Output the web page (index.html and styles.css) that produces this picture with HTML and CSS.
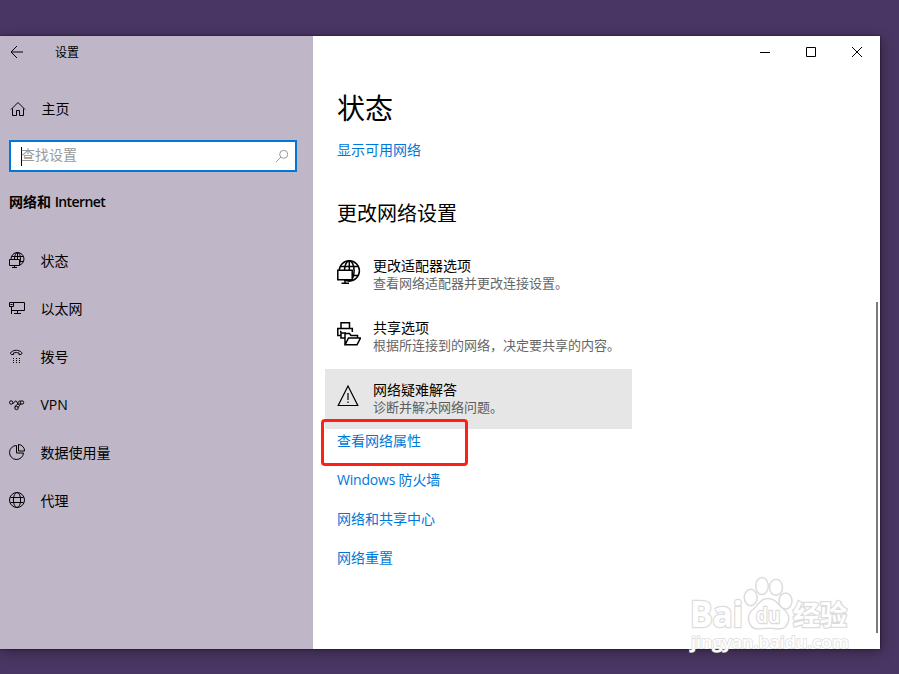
FILE: index.html
```html
<!DOCTYPE html>
<html lang="zh-CN">
<head>
    <meta charset="UTF-8">
    <meta name="viewport" content="width=device-width, initial-scale=1.0">
    <title>设置</title>
    <link rel="stylesheet" href="styles.css">
</head>
<body>
    <div class="window">
        <aside class="sidebar">
            <div class="titlebar">
                <svg class="back" width="14" height="14" viewBox="0 0 14 14"><path d="M7 1L1 7l6 6M1 7h12"/></svg>
                <span>设置</span>
            </div>

            <a class="nav-item home">
                <svg width="16" height="16" viewBox="0 0 16 16"><path d="M1 8.5L8 1.5l7 7M2.5 7.5v7h4v-5h3v5h4v-7"/></svg>
                <span>主页</span>
            </a>

            <div class="search">
                <span class="caret"></span>
                <span class="placeholder">查找设置</span>
                <svg width="14" height="14" viewBox="0 0 14 14"><circle cx="8.7" cy="5.3" r="4"/><path d="M5.8 8.2L1 13"/></svg>
            </div>

            <h2 class="section-name">网络和 <span class="latin">Internet</span></h2>

            <nav>
                <a class="nav-item">
                    <svg width="18" height="18" viewBox="0 0 18 18"><circle cx="8.5" cy="7" r="6.5"/><ellipse cx="8.5" cy="7" rx="3" ry="6.5"/><path d="M8.5.5V7M2.500 4.500h12M10.500 9.500h4.300"/><path class="screen" d="M.5 7.500h10v6H.5z"/><path d="M5.500 13.500v2M3 15.500h5"/></svg>
                    <span>状态</span>
                </a>
                <a class="nav-item">
                    <svg width="18" height="18" viewBox="0 0 18 18"><path d="M4.500 2.500h11v8h-13M.5 2.500h4v4h-4zM2.500 6.500v7.500M8.500 10.500v3M5 13.500h7M1.500 4.500h2"/></svg>
                    <span>以太网</span>
                </a>
                <a class="nav-item">
                    <svg width="18" height="18" viewBox="0 0 18 18"><path d="M4.500 6.500h-2c-1.200-.5-1.200-1.800-.3-2.400C5 1.700 9.500 1.700 12.300 4.100c.9.600.9 1.900-.3 2.400h-2V5c-2-.6-3.500-.6-5.500 0z"/><path stroke-dasharray="1 2" d="M4 10.500h7M4 12.500h7M4 14.500h7"/></svg>
                    <span>拨号</span>
                </a>
                <a class="nav-item">
                    <svg width="18" height="18" viewBox="0 0 18 18"><circle cx="2.200" cy="6.500" r="1.700"/><circle cx="7.500" cy="12" r="1.700"/><circle cx="13" cy="6.500" r="1.700"/><path d="M3.600 7.500c1.500.5 1.500-2.500 3.200-2.500 2 0 1 3.500 3 3.500 1.300 0 1-1 1.700-1.700M6 11c-.5-1.700 2.700-1.500 3-3.500.2-2 1.200-3 2.800-2.400M9.200 11.700c.5-1.700 1.500-2.500 2.700-3.700"/></svg>
                    <span>VPN</span>
                </a>
                <a class="nav-item">
                    <svg width="18" height="18" viewBox="0 0 18 18"><path d="M7.500 1.500a7 7 0 1 0 7 7.500h-7zM9.500.5v6.500h6.100A6.500 6.500 0 0 0 9.500.5z"/></svg>
                    <span>数据使用量</span>
                </a>
                <a class="nav-item">
                    <svg width="18" height="18" viewBox="0 0 18 18"><circle cx="8" cy="8" r="7.500"/><ellipse cx="8" cy="8" rx="3.600" ry="7.500"/><path d="M1.500 5.500h13M1.500 10.500h13"/></svg>
                    <span>代理</span>
                </a>
            </nav>
        </aside>

        <main class="content">
            <div class="controls">
                <svg width="46" height="32" viewBox="0 0 46 32"><path d="M18 16.500h10"/></svg>
                <svg width="46" height="32" viewBox="0 0 46 32"><path d="M18.500 11.500h9v9h-9z"/></svg>
                <svg width="46" height="32" viewBox="0 0 46 32"><path d="M18 11l10 10M28 11L18 21"/></svg>
            </div>

            <h1>状态</h1>
            <a class="link available">显示可用网络</a>
            <h2>更改网络设置</h2>

            <div class="options">
                <div class="option">
                    <svg width="24" height="26" viewBox="0 0 24 26"><circle cx="12.300" cy="11.800" r="10.100"/><ellipse cx="12.300" cy="11.800" rx="4.800" ry="10.100"/><path d="M12.300 1.700V11M3.500 7.500h17.800M15.500 16.500h6"/><path class="screen" d="M.8 11.300h14.400v9.500H.8z"/><path d="M8 20.800v3.500M4.500 24.300h7.500"/></svg>
                    <div>
                        <div class="option-title">更改适配器选项</div>
                        <div class="option-text">查看网络适配器并更改连接设置。</div>
                    </div>
                </div>
                <div class="option">
                    <svg width="24" height="26" viewBox="0 0 24 26"><path d="M4 7.500V1.800h8.500v5.700M4 14.500H.8v-7h14.500V11M3 10.500h1.500M7.500 17H4v-5h5M8 23.800V12.500h4.500l1.500 2h6.500V17M8 23.800L11.500 17h12L20 23.800z"/></svg>
                    <div>
                        <div class="option-title">共享选项</div>
                        <div class="option-text">根据所连接到的网络，决定要共享的内容。</div>
                    </div>
                </div>
                <div class="option active">
                    <svg class="thin" width="24" height="26" viewBox="0 0 24 26"><path d="M11 3L1.200 22.500h19.600zM11 10v7M11 18.500v1.500"/></svg>
                    <div>
                        <div class="option-title">网络疑难解答</div>
                        <div class="option-text">诊断并解决网络问题。</div>
                    </div>
                </div>
            </div>

            <div class="links">
                <a class="link marked">查看网络属性</a>
                <a class="link firewall">Windows 防火墙</a>
                <a class="link">网络和共享中心</a>
                <a class="link">网络重置</a>
            </div>
            <div class="scrollbar"></div>
        </main>
    </div>

    <svg class="watermark" width="180" height="90" viewBox="0 0 180 90">
        <ellipse cx="65.700" cy="30.500" rx="6.500" ry="8.200"/>
        <ellipse cx="77" cy="19" rx="6.300" ry="8.500"/>
        <ellipse cx="91" cy="20.300" rx="6.500" ry="8"/>
        <ellipse cx="100.500" cy="34" rx="6.500" ry="8"/>
        <path d="M83 31.500c-8 0-9 6-14.500 10.500-8 6-6 20 5 20 4 0 6-.8 10-.8s6 .8 10 .8c11 0 13.500-13 5.500-19.500C93 38 91 31.500 83 31.500z"/>
        <text class="mark-big" x="5" y="60" textLength="53" lengthAdjust="spacingAndGlyphs">Bai</text>
        <text class="mark-du" x="71" y="56" textLength="24" lengthAdjust="spacingAndGlyphs">du</text>
        <text class="mark-cn" x="108" y="58" textLength="54" lengthAdjust="spacingAndGlyphs">经验</text>
        <text class="mark-url" x="6" y="80.500" textLength="158" lengthAdjust="spacingAndGlyphs">jingyan.baidu.com</text>
    </svg>
</body>
</html>
```

FILE: styles.css
```css
* {
    box-sizing: border-box;
}

body {
    margin: 0;
    padding-top: 36px;
    height: 674px;
    overflow: hidden;
    background-color: #4a3664;
    font-family: "Open Sans", "Noto Sans CJK SC", sans-serif;
    font-size: 14px;
    color: #000;
}

h1, h2 {
    margin: 0;
    font-weight: 400;
}

svg {
    display: block;
    flex: none;
    fill: none;
    stroke: #000;
    stroke-width: 1;
}

.window {
    display: flex;
    width: 880px;
    height: 613px;
    box-shadow: 0 0 2px rgba(0, 0, 0, 0.7), 2px 3px 12px rgba(0, 0, 0, 0.35);
}

/* sidebar */
.sidebar {
    width: 313px;
    background-color: #bfb7c8;
}

.titlebar {
    display: flex;
    align-items: center;
    gap: 31px;
    height: 32px;
    padding-left: 10px;
    font-size: 12px;
}

.nav-item {
    display: flex;
    align-items: center;
    gap: 13.5px;
    height: 48px;
    padding-left: 9px;
    line-height: 20px;
}

.nav-item .screen {
    fill: #bfb7c8;
}

.home {
    gap: 15.5px;
    margin-top: 17px;
    padding-left: 10px;
}

.search {
    display: flex;
    align-items: center;
    width: 288px;
    height: 32px;
    margin: 7px 0 0 9px;
    padding: 0 6px 0 10px;
    border: 2px solid #0078d7;
    background-color: #fff;
}

.search svg {
    margin-left: auto;
    stroke: #999;
}

.caret {
    width: 1px;
    height: 19px;
    background-color: #000;
}

.placeholder {
    margin-left: -1px;
    padding-bottom: 2px;
    line-height: 20px;
    color: #999;
}

.section-name {
    margin: 20px 0 25px 9px;
    font-size: 14px;
    font-weight: 600;
    line-height: 20px;
}

.latin {
    letter-spacing: -0.6px;
}

/* content */
.content {
    display: flex;
    flex: 1;
    flex-direction: column;
    align-items: flex-start;
    position: relative;
    padding-left: 24px;
    background-color: #fff;
}

.controls {
    display: flex;
    align-self: flex-end;
    height: 32px;
}

h1 {
    margin-top: 20px;
    font-size: 28px;
    line-height: 40px;
}

.content h2 {
    margin-top: 39px;
    font-size: 20px;
    line-height: 30px;
}

.link {
    line-height: 20px;
    color: #0078d7;
}

.available {
    margin-top: 12px;
}

.firewall {
    letter-spacing: -0.2px;
}

.options {
    display: flex;
    flex-direction: column;
    gap: 2px;
    margin: 16px 0 0 -12px;
}

.option {
    display: flex;
    gap: 12px;
    width: 307px;
    height: 60px;
    padding: 12px 0 0 12px;
    line-height: 18px;
    white-space: nowrap;
}

.option svg {
    margin-top: 2px;
    stroke-width: 1.5;
}

.option .screen {
    fill: #fff;
}

.option .thin {
    stroke-width: 1.2;
}

.option-text {
    font-size: 13px;
    line-height: 17px;
    color: #666;
}

.active {
    background-color: #e6e6e6;
}

.active .option-text {
    color: #5c5c5c;
}

.links {
    display: flex;
    flex-direction: column;
    gap: 19px;
    margin-top: 2px;
}

.marked {
    position: relative;
}

.marked::after {
    content: "";
    box-sizing: border-box;
    position: absolute;
    top: -12px;
    left: -16px;
    width: 147px;
    height: 47px;
    border: 3px solid #ff2015;
    border-radius: 4px;
}

.scrollbar {
    position: absolute;
    top: 266px;
    right: 2px;
    width: 2px;
    height: 331px;
    background-color: #7a7a7a;
}

/* watermark */
.watermark {
    position: absolute;
    left: 685px;
    top: 567px;
    fill: #fff;
    stroke: #dcdcdc;
    stroke-width: 1.5;
}

.watermark text {
    font-family: "Open Sans", "Noto Sans CJK SC", sans-serif;
    font-weight: 700;
    paint-order: stroke;
    stroke-width: 2.5;
}

.mark-big {
    font-size: 36px;
}

.watermark .mark-du {
    font-size: 22px;
    font-weight: 600;
}

.mark-cn {
    font-size: 27px;
}

.watermark .mark-url {
    font-size: 17px;
    font-weight: 600;
    stroke-width: 1.5;
}
```
